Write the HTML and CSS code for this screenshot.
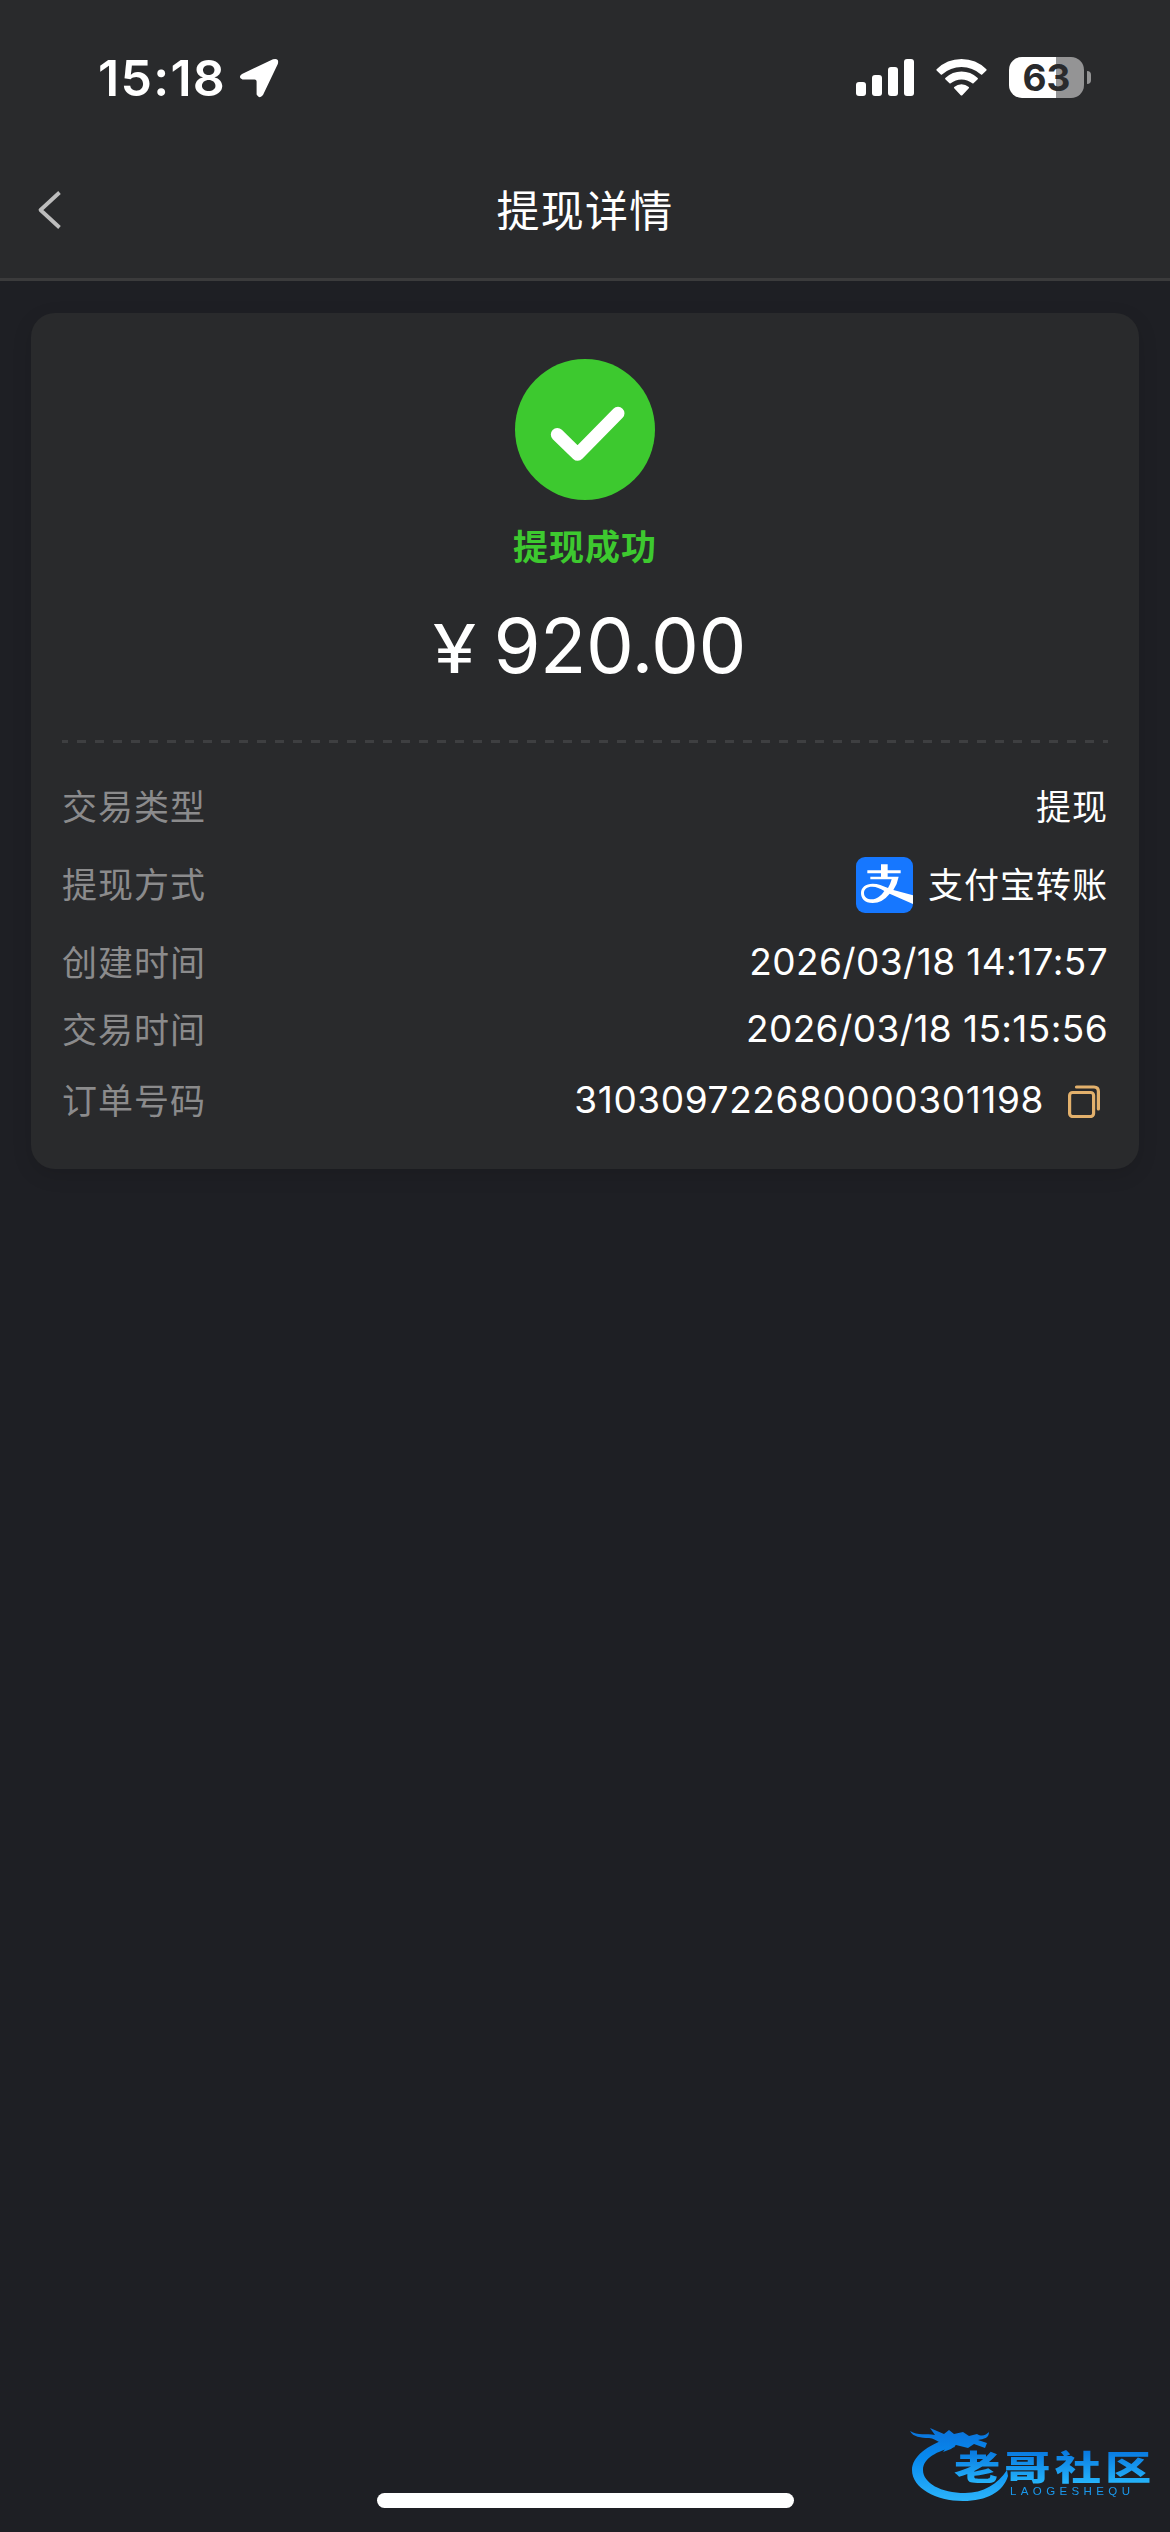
FILE: index.html
```html
<!DOCTYPE html>
<html lang="zh-CN">
<head>
    <meta charset="UTF-8">
    <meta name="viewport" content="width=device-width, initial-scale=1.0">
    <title>提现详情</title>
    <link rel="stylesheet" href="styles.css">
</head>
<body>
    <header class="header">
        <div class="status-bar">
            <div class="status-left">
                <span class="time">15:18</span>
                <svg class="location" width="40" height="40" viewBox="0 0 40 40">
                    <path d="M3 16 L34 1.3 Q40.5 -.3 38.8 6 L24 37 Q20.5 41.5 17.6 36.5 V23.5 Q17.6 21.5 15.6 21.5 H3.5 Q-1.5 19.5 3 16Z" fill="#fff"/>
                </svg>
            </div>
            <div class="status-right">
                <svg width="58" height="37" viewBox="0 0 58 37" fill="#fff">
                    <rect x="0" y="23" width="10" height="14" rx="3"/>
                    <rect x="16" y="16" width="10" height="21" rx="3"/>
                    <rect x="32" y="8" width="10" height="29" rx="3"/>
                    <rect x="48" y="0" width="10" height="37" rx="3"/>
                </svg>
                <svg width="51" height="37" viewBox="0 0 51 37" fill="#fff">
                    <path d="M.6 10.2 Q11 0 25.500 0 Q40 0 50.400 10.200 Q50.900 10.800 50.400 11.400 L46.200 15.500 Q45.600 16 45 15.500 Q36.500 8 25.500 8 Q14.500 8 6 15.500 Q5.400 16 4.800 15.500 L.6 11.400 Q.1 10.800 .6 10.200Z"/>
                    <path d="M9.300 19 Q16.500 12.600 25.500 12.600 Q34.500 12.600 41.700 19 Q42.200 19.600 41.700 20.200 L37.500 24.300 Q36.900 24.800 36.300 24.300 Q31.500 20.500 25.500 20.500 Q19.500 20.500 14.700 24.300 Q14.100 24.800 13.500 24.300 L9.300 20.200 Q8.800 19.600 9.300 19Z"/>
                    <path d="M18.200 28 Q21.500 25.300 25.500 25.300 Q29.500 25.300 32.800 28 Q33.400 28.700 32.800 29.300 L26.300 36.200 Q25.500 37 24.700 36.200 L18.200 29.300 Q17.600 28.700 18.200 28Z"/>
                </svg>
                <div class="battery">
                    <div class="battery-body">63</div>
                    <div class="battery-cap"></div>
                </div>
            </div>
        </div>
        <nav class="nav">
            <svg class="back" width="26" height="40" viewBox="0 0 26 40">
                <path d="M23.500 2.500 L4.500 20 L23.500 37.500" fill="none" stroke="#bdbdbd" stroke-width="3.800" stroke-linejoin="round"/>
            </svg>
            <h1 class="title">提现详情</h1>
        </nav>
    </header>

    <main class="card">
        <section class="result">
            <svg width="140" height="141" viewBox="0 0 140 141">
                <ellipse cx="70" cy="70.500" rx="70" ry="70.500" fill="#3dc92f"/>
                <path d="M42.300 75.500 L62.700 95.300 L103 54.300" fill="none" stroke="#fff" stroke-width="13" stroke-linecap="round" stroke-linejoin="round"/>
            </svg>
            <div class="result-text">提现成功</div>
            <div class="amount"><span class="currency">¥</span><span>920.00</span></div>
        </section>
        <div class="divider"></div>
        <section class="details">
            <div class="row">
                <span class="label">交易类型</span>
                <span class="value"><span class="text">提现</span></span>
            </div>
            <div class="row row-method">
                <span class="label">提现方式</span>
                <span class="value">
                    <svg class="alipay" width="57" height="56" viewBox="0 0 171 168">
                        <rect width="171" height="168" rx="27" fill="#1677ff"/>
                        <path d="M34 40 H75 V22 H95 V40 H134 V49 H95 V59 H128 Q124 81 112 99 L171 115 V141 L101 110 Q79 138 50 138 C25 138 15 124 15 108 C15 91 29 80 50 80 C66 80 80 86 96 93 Q103 82 107 67 H43 V59 H75 V49 H34Z M85 102 C72 94 61 89 49 89 C32 89 24 97 24 108 C24 120 34 127 47 127 C62 127 75 117 85 102Z" fill="#fff" fill-rule="evenodd"/>
                    </svg>
                    <span class="text">支付宝转账</span>
                </span>
            </div>
            <div class="row">
                <span class="label">创建时间</span>
                <span class="value"><span class="number">2026/03/18 14:17:57</span></span>
            </div>
            <div class="row">
                <span class="label">交易时间</span>
                <span class="value"><span class="number">2026/03/18 15:15:56</span></span>
            </div>
            <div class="row row-order">
                <span class="label">订单号码</span>
                <span class="value">
                    <span class="number order-number">310309722680000301198</span>
                    <svg class="copy" width="32" height="33" viewBox="0 0 32 33" fill="none" stroke="#e2b06c" stroke-width="3.200" stroke-linecap="round">
                        <rect x="1.600" y="7.500" width="24" height="24" rx="3"/>
                        <path d="M8.500 2 H26 Q30.400 2 30.400 6.500 V24"/>
                    </svg>
                </span>
            </div>
        </section>
    </main>

    <svg class="watermark" width="250" height="90" viewBox="0 0 250 90">
        <defs>
            <linearGradient id="blue" x1="0" y1="10" x2="0" y2="82" gradientUnits="userSpaceOnUse">
                <stop offset="0" stop-color="#0b74dc"/>
                <stop offset=".4" stop-color="#078af0"/>
                <stop offset="1" stop-color="#2db5fa"/>
            </linearGradient>
            <linearGradient id="word" x1="0" y1="0" x2="0" y2="1">
                <stop offset=".2" stop-color="#0878e0"/>
                <stop offset=".85" stop-color="#25b3fa"/>
            </linearGradient>
        </defs>
        <g fill="url(#blue)">
            <path d="M38 18 C16 25 1 37 1 50 C1 68 25 81 52 81 C76 81 92 72 97 56 L96 50 C87 64 72 73 54 73 C30 73 12 63 12 50 C12 38 26 31 44 27Z"/>
            <path d="M-1 11 C7 16 15 13 24 15 L19 8 L33 14 L38 10 L43 14 L52 12 L58 16 L66 14 C71 17 75 15 78 12 C78 18 73 19 67 20 L76 23 L74 28 L63 24 L57 28 L45 25 L40 29 L32 32 L37 25 C27 24 27 19 18 18 C10 18 2 17 -1 11Z"/>
        </g>
        <text class="watermark-name" transform="translate(43 60) scale(1.360 1)" fill="url(#word)">老哥社区</text>
        <text class="watermark-latin" x="99" y="74.500" textLength="120">LAOGESHEQU</text>
    </svg>
    <div class="home-indicator"></div>
</body>
</html>
```
FILE: styles.css
```css
* {
    box-sizing: border-box;
}

body {
    margin: 0;
    position: relative;
    height: 2532px;
    background-color: #1e1f24;
    color: #fff;
    font-family: Inter, "Noto Sans CJK SC", sans-serif;
    overflow: hidden;
}

svg {
    display: block;
    flex: none;
}

.header {
    height: 281px;
    background-color: #292a2c;
    border-bottom: 3px solid #3b3b3c;
}

.status-bar {
    display: flex;
    justify-content: space-between;
    height: 141px;
    padding: 57px 79px 0 98px;
}

.status-left {
    display: flex;
    gap: 13px;
    height: 42px;
    align-items: center;
}

.time {
    font-size: 50px;
    font-weight: 600;
    letter-spacing: 1.3px;
    line-height: 42px;
}

.status-right {
    display: flex;
    gap: 22px;
    height: 41px;
    align-items: center;
}

.battery {
    display: flex;
    align-items: center;
    gap: 3px;
}

.battery-body {
    width: 75px;
    height: 41px;
    border-radius: 13px;
    background: linear-gradient(to right, #fff 47px, #949495 47px);
    color: #292a2c;
    font-size: 37px;
    font-weight: 700;
    line-height: 41px;
    text-align: center;
}

.battery-cap {
    width: 4px;
    height: 13px;
    border-radius: 0 4px 4px 0;
    background-color: #949495;
}

.nav {
    display: grid;
    grid-template-columns: 100px 1fr 100px;
    align-items: center;
    height: 137px;
}

.back {
    margin-left: 36px;
}

.title {
    margin: 0;
    padding-bottom: 4px;
    font-size: 43px;
    font-weight: 400;
    letter-spacing: 1.3px;
    text-align: center;
}

.card {
    height: 856px;
    margin: 32px 31px 0;
    padding: 46px 31px 0;
    border-radius: 24px;
    background-color: #292a2c;
    box-shadow: 0 6px 20px rgba(0, 0, 0, 0.12);
}

.result {
    display: flex;
    flex-direction: column;
    align-items: center;
    height: 381px;
}

.result-text {
    margin-top: 21px;
    color: #3dc92f;
    font-size: 35px;
    font-weight: 700;
    letter-spacing: 1px;
    line-height: 52px;
}

.amount {
    display: flex;
    align-items: baseline;
    gap: 21px;
    margin-top: 27px;
    padding-left: 12px;
    font-size: 76px;
    letter-spacing: -0.5px;
    line-height: 90px;
}

.currency {
    font-size: 67px;
    transform: scaleX(1.18);
}

.divider {
    height: 3px;
    background: repeating-linear-gradient(to right, #3e3f41 0 9px, transparent 9px 18px) -3px 0 / 1080px 3px;
}

.details {
    display: flex;
    flex-direction: column;
    gap: 17px;
    padding-top: 39px;
}

.row {
    display: flex;
    justify-content: space-between;
    align-items: center;
    height: 50px;
    font-size: 35px;
    letter-spacing: 1px;
}

.row-method {
    height: 72px;
}

.row-order {
    height: 58px;
}

.label,
.text {
    padding-bottom: 5px;
}

.label {
    color: #8b8b8c;
}

.value {
    display: flex;
    align-items: center;
}

.number {
    padding-bottom: 3px;
    font-size: 37px;
    letter-spacing: 0.4px;
}

.order-number {
    letter-spacing: 0.6px;
}

.alipay {
    margin-right: 15px;
}

.copy {
    margin: 0 8px 0 24px;
}

.watermark {
    position: absolute;
    left: 911px;
    top: 2420px;
    overflow: visible;
    filter: blur(0.6px);
}

.watermark-name {
    font-family: "Noto Sans CJK SC", sans-serif;
    font-size: 34px;
    font-weight: 900;
    letter-spacing: 3px;
}

.watermark-latin {
    font-family: "Liberation Sans", sans-serif;
    font-size: 11.5px;
    fill: #1a98ec;
}

.home-indicator {
    position: absolute;
    left: 377px;
    top: 2493px;
    width: 417px;
    height: 15px;
    border-radius: 8px;
    background-color: #fff;
}
```
